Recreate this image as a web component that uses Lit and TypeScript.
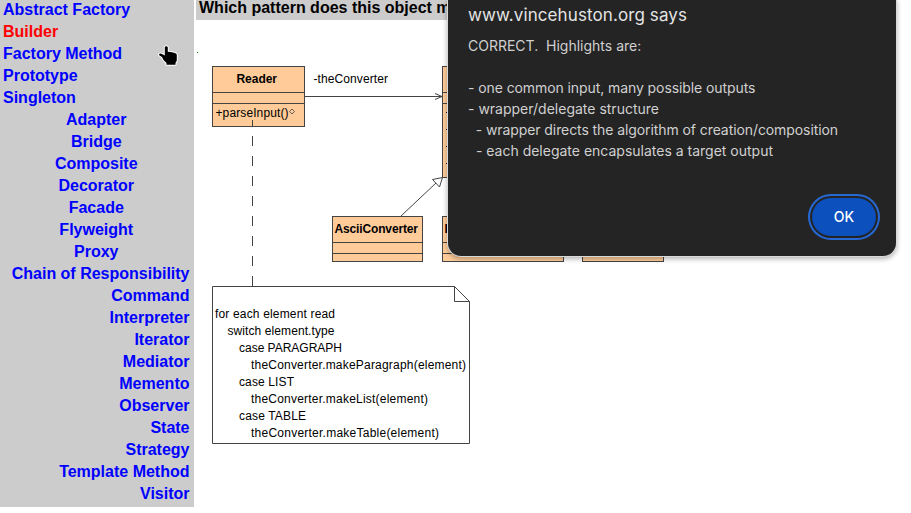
import { LitElement, html, svg, css } from "lit";
import { customElement } from "lit/decorators.js";

const creational = ["Abstract Factory", "Builder", "Factory Method", "Prototype", "Singleton"];
const structural = ["Adapter", "Bridge", "Composite", "Decorator", "Facade", "Flyweight", "Proxy"];
const behavioral = ["Chain of Responsibility", "Command", "Interpreter", "Iterator", "Mediator", "Memento",
  "Observer", "State", "Strategy", "Template Method", "Visitor"];

@customElement("pattern-menu")
class PatternMenu extends LitElement {
  static styles = css`
    :host { display: block; width: 194px; height: 507px; background: #ccc; overflow: hidden; flex: none;
      font: bold 16px/22px "Liberation Sans", Arial, sans-serif; color: #00f; position: relative; }
    nav { display: flex; flex-direction: column; margin-top: -1px; padding: 0 4.5px 0 3px; white-space: nowrap; }
    .center { text-align: center; }
    .right { text-align: right; }
    .current { color: #f00; }
    .hand { position: absolute; left: 157px; top: 43px; }
  `;
  group(names: string[], side: string) {
    return html`<div class=${side}>${names.map((n) => html`<div class=${n === "Builder" ? "current" : "link"}>${n}</div>`)}</div>`;
  }
  render() {
    return html`<nav>${this.group(creational, "left")}${this.group(structural, "center")}${this.group(behavioral, "right")}</nav>
      <svg class="hand" width="22" height="25" viewBox="0 0 22 25">
        <path d="M7.800 4.500Q7.800 3.200 9.200 3.200T10.800 4.500V8.800L14 9L17 9.800L19 10.500Q19.800 11 19.800 12V17.500L18.500 20V21.800H9.500V20L6.500 17L5 14L2.500 12.500Q1.500 11.500 2.500 10.800Q3.500 10.300 5 11L7.800 12.500Z"
          fill="#000" stroke="#fff" stroke-width="2" paint-order="stroke" stroke-linejoin="round"/>
      </svg>`;
  }
}

const classBox = (x: number, y: number, w: number, h: number) => svg`
  <rect class="box" x=${x} y=${y} width=${w} height=${h} />
  <path class="line" d="M${x} ${y + 26}h${w}M${x} ${y + 37}h${w}" />`;

const label = (x: number, y: number, w: number, text: string, cls = "plain") =>
  svg`<text class=${cls} x=${x} y=${y} textLength=${w}>${text}</text>`;

@customElement("class-diagram")
class ClassDiagram extends LitElement {
  static styles = css`
    :host { display: block; }
    svg { display: block; }
    .box { fill: #fc9; stroke: #444; }
    .line { fill: none; stroke: #444; }
    .fill { fill: #fff; stroke: #444; }
    text { font: 12px "Liberation Sans", Arial, sans-serif; fill: #000; }
    .bold { font-weight: bold; }
    .speck { fill: #080; }
  `;
  render() {
    return html`<svg width="715" height="493" viewBox="196 20 715 493">
      <rect class="speck" x="197" y="52" width="1" height="1" />
      ${classBox(212.5, 66.5, 92, 60)}
      ${classBox(442.5, 66.5, 121, 111)}
      ${classBox(332.5, 216.5, 90, 45)}
      ${classBox(442.5, 216.5, 121, 45)}
      ${classBox(582.5, 216.5, 81, 45)}
      ${[112, 129, 146, 163].map((y) => svg`<rect x="446" y=${y} width="2" height="1" />`)}
      <path class="line" d="M305 96.500H442M435 93.500L442 96.500L435 99.500" />
      <path class="line" d="M252.500 120V286" stroke-dasharray="10 10" stroke-dashoffset="4" />
      <path class="line" d="M401 216L436 183" />
      <path class="fill" d="M442.500 177.500L432.500 179.500L439.500 187Z" />
      <path class="fill" d="M212.500 286.500H454.500L469.500 301.500V443.500H212.500Z" />
      <path class="line" d="M454.500 286.500V301.500H469.500" />
      <path class="line" d="M289.500 111.500L292 109L294.500 111.500L292 114Z" stroke-width=".8" />
      ${label(236.5, 83, 40.5, "Reader", "bold")}
      ${label(313.5, 83, 74.5, "-theConverter")}
      ${label(215.5, 117, 73, "+parseInput()")}
      ${label(334.5, 233, 83.5, "AsciiConverter", "bold")}
      <text class="bold" x="444.500" y="233">L</text>
      ${label(215, 318, 120, "for each element read")}
      ${label(227.5, 335, 107, "switch element.type")}
      ${label(239, 352, 103, "case PARAGRAPH")}
      ${label(251, 369, 215, "theConverter.makeParagraph(element)")}
      ${label(239, 386, 55, "case LIST")}
      ${label(251, 403, 177, "theConverter.makeList(element)")}
      ${label(239, 420, 67, "case TABLE")}
      ${label(251, 437, 188, "theConverter.makeTable(element)")}
    </svg>`;
  }
}

@customElement("alert-dialog")
class AlertDialog extends LitElement {
  static styles = css`
    :host { display: flex; flex-direction: column; box-sizing: border-box; width: 448px; height: 256px;
      padding: 4px 16px 20px 20px; background: #242424; color: #e3e3e3; border-radius: 0 0 13px 13px;
      box-shadow: 0 0 0 1px #d8d8d8, 0 2px 5px 1px rgba(0,0,0,.3);
      font: 14px/21px Inter, Roboto, sans-serif; }
    .title { font-size: 17px; line-height: 22px; letter-spacing: .1px; }
    .message { margin-top: 9px; white-space: pre; color: #d0d0d0; }
    .line { min-height: 21px; }
    .tight { letter-spacing: -.085px; }
    .ok { margin-top: auto; align-self: flex-end; width: 64px; height: 38px; border-radius: 19px; margin-right: 4px;
      display: flex; align-items: center; justify-content: center; box-sizing: border-box; padding-bottom: 1px;
      background: #0b50bd; color: #fff; font-weight: 500; box-shadow: 0 0 0 2px #242424, 0 0 0 4px #2769d4; }
  `;
  render() {
    const lines: [string, string][] = [
      ["CORRECT.  Highlights are:", "line"],
      ["", "line"],
      ["- one common input, many possible outputs", "line tight"],
      ["- wrapper/delegate structure", "line"],
      ["  - wrapper directs the algorithm of creation/composition", "line tight"],
      ["  - each delegate encapsulates a target output", "line"],
    ];
    return html`<div class="title">www.vincehuston.org says</div>
      <div class="message">${lines.map(([text, cls]) => html`<div class=${cls}>${text}</div>`)}</div>
      <div class="ok">OK</div>`;
  }
}

@customElement("app-root")
class AppRoot extends LitElement {
  static styles = css`
    :host { display: flex; gap: 2px; width: 911px; height: 513px; overflow: hidden; background: #fff; position: relative; }
    main { flex: 1; min-width: 0; }
    .question { height: 20px; box-sizing: border-box; padding-left: 3px; background: #ccc; margin-right: 15px;
      font: bold 16px/15px "Liberation Sans", Arial, sans-serif; white-space: nowrap; overflow: hidden; color: #000; }
    alert-dialog { position: absolute; left: 448px; top: 0; }
  `;
  render() {
    return html`<pattern-menu></pattern-menu>
      <main><div class="question">Which pattern does this object m</div><class-diagram></class-diagram></main>
      <alert-dialog></alert-dialog>`;
  }
}
